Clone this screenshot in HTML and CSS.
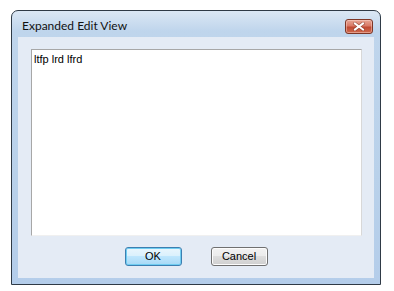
FILE: index.html
```html
<!DOCTYPE html>
<html lang="en">

<head>
    <meta charset="UTF-8">
    <title>Expanded Edit View</title>
    <link rel="stylesheet" href="styles.css">
</head>

<body>
    <div class="window">
        <div class="titlebar">
            <span class="title">Expanded Edit View</span>
            <div class="close">
                <svg width="12" height="9" viewBox="0 0 12 9">
                    <path d="M2 1.5 L10 7.5 M10 1.5 L2 7.5" stroke="#6a2a1e" stroke-width="3.4" stroke-linecap="square" opacity="0.5"/>
                    <path d="M2 1.5 L10 7.5 M10 1.5 L2 7.5" stroke="#fff" stroke-width="2" stroke-linecap="square"/>
                </svg>
            </div>
        </div>
        <div class="client">
            <div class="editbox">ltfp lrd lfrd</div>
            <div class="buttons">
                <div class="btn default">OK</div>
                <div class="btn">Cancel</div>
            </div>
        </div>
    </div>
</body>

</html>
```

FILE: styles.css
```css
* {
    margin: 0;
    padding: 0;
    box-sizing: border-box;
}

body {
    background-color: #fff;
    font-family: "Liberation Sans", Arial, sans-serif;
    font-size: 11px;
    color: #000;
}

.window {
    margin: 10px 0 0 11px;
    width: 370px;
    height: 275px;
    border: 1px solid #2f3a46;
    border-radius: 7px 7px 0 0;
    background: linear-gradient(#dbe7f4, #bfd5ec 20px, #b9d1ea 60%, #b4cdea);
    padding: 0 6px 6px 6px;
    display: flex;
    flex-direction: column;
    box-shadow: 0 1px 0 #5fc8ea;
}

.titlebar {
    height: 26px;
    display: flex;
    align-items: flex-start;
    justify-content: space-between;
}

.title {
    font-family: Lato, "Liberation Sans", sans-serif;
    font-size: 12px;
    color: #111;
    margin: 7px 0 0 4px;
}

.close {
    width: 28px;
    height: 15px;
    margin: 8px 1px 0 0;
    border: 1px solid #7d3626;
    border-radius: 3px;
    background: linear-gradient(#e8a594, #d97966 45%, #c04a33 55%, #cf6a4e);
    box-shadow: inset 0 0 0 1px rgba(255, 220, 210, .45);
    display: flex;
    align-items: center;
    justify-content: center;
}

.client {
    flex: 1;
    background-color: #e4ebf5;
    padding: 12px 12px 0 13px;
    display: flex;
    flex-direction: column;
}

.editbox {
    height: 187px;
    background-color: #fff;
    border-top: 1px solid #a7a7a7;
    border-left: 1px solid #a7a7a7;
    border-right: 1px solid #d8d8d8;
    border-bottom: 1px solid #f0f0f0;
    padding: 3px 2px;
    line-height: 13px;
}

.buttons {
    display: flex;
    justify-content: center;
    gap: 29px;
    margin-top: 11px;
    padding-right: 1px;
}

.btn {
    width: 57px;
    height: 19px;
    border: 1px solid #707070;
    border-radius: 3px;
    background: linear-gradient(#f2f2f2, #ebebeb 50%, #dddddd 50%, #cfcfcf);
    box-shadow: inset 0 0 0 1px #fcfcfc;
    text-align: center;
    line-height: 17px;
}

.btn.default {
    border-color: #3c7fb1;
    background: linear-gradient(#eaf6fd, #d9f0fc 50%, #bee6fd 50%, #a7d9f5);
    box-shadow: inset 0 0 0 1px #6fcdf1;
}
```
